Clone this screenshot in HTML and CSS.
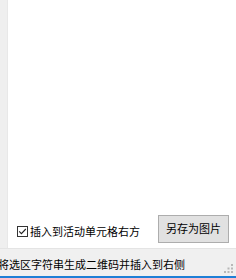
FILE: index.html
```html
<!DOCTYPE html>
<html>
<head>
<meta charset="utf-8">
<link rel="stylesheet" href="styles.css">
</head>
<body>
<div class="window">
  <div class="main">
    <div class="side"></div>
    <div class="panel">
      <div class="options">
        <label class="check">
          <svg class="box" width="11" height="11" viewBox="0 0 11 11">
            <rect x="0.5" y="0.5" width="10" height="10" fill="#fff" stroke="#333"/>
            <path d="M2.2 5.4 L4.4 7.6 L8.8 3.0" fill="none" stroke="#222" stroke-width="1.1"/>
          </svg>
          <span class="label">插入到活动单元格右方</span>
        </label>
        <button class="btn">另存为图片</button>
      </div>
    </div>
  </div>
  <div class="status">
    <span class="status-text">将选区字符串生成二维码并插入到右侧</span>
    <svg class="grip" width="10" height="10" viewBox="0 0 10 10">
      <rect x="7" y="0" width="2" height="2" fill="#b8b8b8"/>
      <rect x="3.5" y="3.5" width="2" height="2" fill="#b8b8b8"/>
      <rect x="7" y="3.5" width="2" height="2" fill="#b8b8b8"/>
      <rect x="0" y="7" width="2" height="2" fill="#b8b8b8"/>
      <rect x="3.5" y="7" width="2" height="2" fill="#b8b8b8"/>
      <rect x="7" y="7" width="2" height="2" fill="#b8b8b8"/>
    </svg>
  </div>
</div>
</body>
</html>
```
FILE: styles.css
```css
html, body {
  margin: 0;
  padding: 0;
}
body {
  width: 236px;
  height: 278px;
  overflow: hidden;
  background: #f0f0f0;
  font-family: "Noto Sans CJK SC", "Microsoft YaHei", sans-serif;
  font-size: 11px;
  color: #000;
}
.window {
  display: flex;
  flex-direction: column;
  height: 278px;
}
.main {
  display: flex;
  height: 248px;
}
.side {
  width: 8px;
  background: #efefef;
  box-shadow: inset -1px 0 0 #e8e8e8;
}
.panel {
  flex: 1;
  background: #fff;
  display: flex;
  flex-direction: column;
  justify-content: flex-end;
  padding: 0 7px 5px 9px;
}
.options {
  display: flex;
  align-items: center;
  justify-content: space-between;
}
.check {
  display: flex;
  align-items: center;
  gap: 2px;
  margin-top: 4px;
}
.box {
  display: block;
}
.label {
  line-height: 14px;
}
.btn {
  width: 71px;
  height: 28px;
  padding: 0;
  margin: 0;
  background: #e1e1e1;
  border: 1px solid #adadad;
  font-family: inherit;
  font-size: 11px;
  color: #000;
  line-height: 14px;
  padding-bottom: 3px;
}
.status {
  position: relative;
  flex: 1;
  border-top: 1px solid #e4e4e4;
  border-bottom: 2px solid #1e7fd6;
  display: flex;
  align-items: center;
}
.status-text {
  margin-left: -2px;
  margin-top: 3px;
  white-space: nowrap;
  line-height: 14px;
}
.grip {
  position: absolute;
  right: 2px;
  bottom: 2px;
}
```
